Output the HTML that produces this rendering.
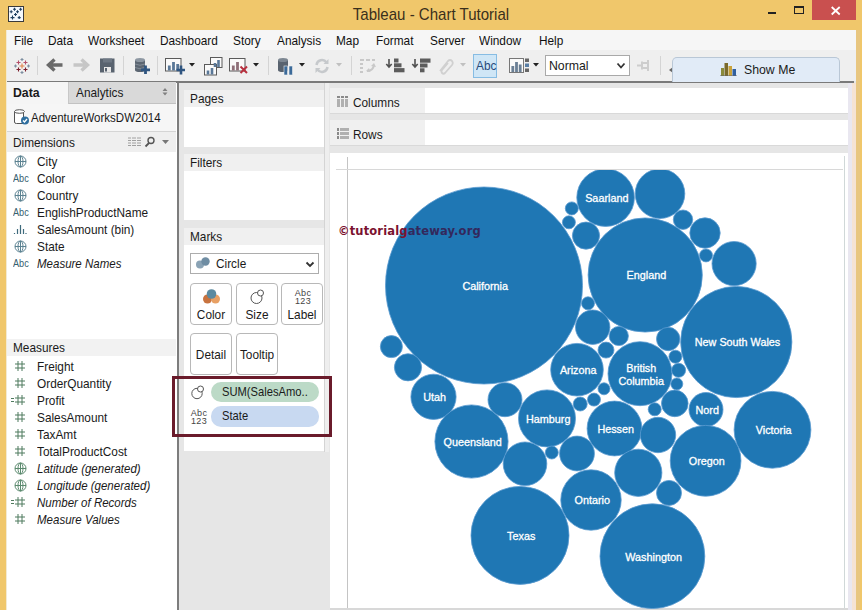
<!DOCTYPE html>
<html><head><meta charset="utf-8"><title>Tableau - Chart Tutorial</title>
<style>
html,body{margin:0;padding:0;}
body{width:862px;height:610px;overflow:hidden;position:relative;background:#f0c76b;font-family:"Liberation Sans",sans-serif;font-size:13px;color:#1a1a1a;}
.abs{position:absolute;}
#win{position:absolute;left:7px;top:30px;width:849px;height:580px;background:#e6e6e6;}
#title{position:absolute;left:0;top:5px;width:862px;text-align:center;font-size:17px;color:#3a2f1c;transform:scaleX(.885);transform-origin:430.5px 50%;}
#menubar{position:absolute;left:7px;top:30px;width:849px;height:20px;background:#f6f6f6;}
#menubar span{position:absolute;top:3px;font-size:13px;color:#111;}
#toolbar{position:absolute;left:7px;top:50px;width:849px;height:31px;background:#efefef;}
#tbline{position:absolute;left:7px;top:81px;width:847px;height:2px;background:#7a7a7a;}
#leftpane{position:absolute;left:7px;top:83px;width:170px;height:527px;background:#fff;}
#vsep{position:absolute;left:176.500px;top:83px;width:2px;height:527px;background:#7d7d7d;}
.card{position:absolute;background:#fff;}
.card .hd{position:absolute;left:0;top:0;right:0;height:17px;background:#f0f0f0;}
.card .hd span{position:absolute;left:6px;top:1px;font-size:13px;}
.lp{position:absolute;left:37px;font-size:13px;white-space:nowrap;transform:scaleX(.91);transform-origin:0 50%;}
span.abs,#menubar span,.card .hd span,.pill span{transform:scaleX(.91);transform-origin:0 50%;white-space:nowrap;}
.btn span{transform:scaleX(.91);}
.pill span{transform:scaleX(.86);}
.it{font-style:italic;}
.lp.it{transform:scaleX(.885);}
.chart{position:absolute;left:0;top:0;}
</style></head><body>
<div id="title">Tableau - Chart Tutorial</div>
<!-- window icon -->
<svg class="abs" style="left:8px;top:6px" width="16" height="16" viewBox="0 0 16 16"><rect x="0.500" y="0.500" width="15" height="15" fill="#f4f8fc" stroke="#3a3a3a"/><path d="M6.5 1.8v3.0M5.0 3.3h3.0M12.6 1.8v3.0M11.1 3.3h3.0M3.2 4.2v3.0M1.7 5.7h3.0M9.5 4.2v3.0M8.0 5.7h3.0M7.5 7.0v3.0M6.0 8.5h3.0M4.5 9.6v4M2.5 11.6h4M11.2 10.1v3.0M9.7 11.6h3.0" stroke="#1f3f5f" stroke-width="1.100" fill="none"/></svg>
<!-- window controls -->
<div class="abs" style="left:812px;top:0;width:44px;height:19.500px;background:#c9504f;"></div>
<svg class="abs" style="left:812px;top:0" width="44" height="20"><path d="M19.700 7l8 7.500M27.700 7l-8 7.500" stroke="#fff" stroke-width="1.800"/></svg>
<div class="abs" style="left:768px;top:11.500px;width:8px;height:2.500px;background:#222;"></div>
<div class="abs" style="left:794px;top:6px;width:8px;height:5px;border:1px solid #222;border-top:2.500px solid #222;"></div>

<div class="abs" style="left:856px;top:30px;width:4px;height:580px;background:#e8c680;"></div><div id="win"></div><div class="abs" style="left:6px;top:30px;width:1px;height:580px;background:#f3ead2;"></div>
<div id="menubar">
<span style="left:7px">File</span><span style="left:41px">Data</span><span style="left:81px">Worksheet</span><span style="left:153px">Dashboard</span><span style="left:226px">Story</span><span style="left:270px">Analysis</span><span style="left:329px">Map</span><span style="left:369px">Format</span><span style="left:423px">Server</span><span style="left:472px">Window</span><span style="left:532px">Help</span>
</div>
<div id="toolbar"></div>
<div id="tbline"></div>
<svg class="abs" style="left:14px;top:57.500px" width="16" height="16" viewBox="0 0 16 16"><g fill="none" stroke-width="1.100"><path d="M8 5.500v5M5.500 8h5" stroke="#e0824a"/><path d="M4.500 2.500v4M2.500 4.500h4M11.500 2.500v4M9.500 4.500h4" stroke="#b5506a"/><path d="M4.500 9.500v4M2.500 11.500h4M11.500 9.500v4M9.500 11.500h4" stroke="#7c1f2c"/><path d="M8 0v3M6.500 1.500h3M8 13v3M6.500 14.500h3M1.500 6.500v3M0 8h3M14.500 6.500v3M13 8h3" stroke="#7d8ea0"/></g></svg>
<div class="abs" style="left:37px;top:56px;width:1px;height:19px;background:#d4d4d4;"></div>
<svg class="abs" style="left:46px;top:57px" width="18" height="16"><path d="M16.500 8h-12M8.500 2.500l-6 5.500l6 5.500" fill="none" stroke="#6a6a6a" stroke-width="3.400"/></svg>
<svg class="abs" style="left:72px;top:57px" width="18" height="16"><path d="M1.500 8h12M9.500 2.500l6 5.500l-6 5.500" fill="none" stroke="#c6c6c6" stroke-width="3.400"/></svg>
<svg class="abs" style="left:100px;top:58px" width="15" height="15"><rect x="0" y="0.500" width="14.500" height="14" fill="#59636f"/><rect x="4" y="9" width="7" height="5.500" fill="#e8e8e8"/><rect x="5" y="10" width="2" height="3.500" fill="#59636f"/><rect x="3" y="0.500" width="9" height="4" fill="#6d7783"/></svg>
<div class="abs" style="left:123px;top:56px;width:1px;height:19px;background:#d4d4d4;"></div>
<svg class="abs" style="left:134px;top:57px" width="17" height="18"><path d="M1 3v10q0 2 5 2q5 0 5-2v-10" fill="#5c6672"/><ellipse cx="6" cy="3" rx="5" ry="2" fill="#8d97a2"/><path d="M1 7q5 2.500 10 0M1 10.500q5 2.500 10 0" fill="none" stroke="#8d97a2" stroke-width="0.800"/><path d="M11.500 8.500v8.500M7 12.800h9" stroke="#2f5580" stroke-width="2.800"/></svg>
<div class="abs" style="left:157px;top:56px;width:1px;height:19px;background:#d4d4d4;"></div>
<svg class="abs" style="left:165px;top:58px" width="20" height="17"><rect x="0.500" y="0.500" width="15.500" height="12.500" fill="#fafafa" stroke="#5a5a5a"/><path d="M4.300 12.500v-5M8.500 12.500v-8.500M12.700 12.500v-6.500" stroke="#5a7898" stroke-width="2.800"/><path d="M16 7.500v9M11.500 12h9" stroke="#2f5580" stroke-width="2.600"/></svg>
<svg class="abs" style="left:188.5px;top:63px" width="6" height="4"><path d="M0 0h6l-3 3.500z" fill="#222"/></svg>
<svg class="abs" style="left:204px;top:57px" width="19" height="19"><rect x="6.500" y="0.500" width="11.500" height="10" fill="#fafafa" stroke="#5a5a5a"/><rect x="0.500" y="7.500" width="12" height="10.500" fill="#fafafa" stroke="#5a5a5a"/><path d="M11 10v-4M14.500 10v-7" stroke="#5a7898" stroke-width="2.600"/><path d="M4 17.500v-4M8 17.500v-6.500" stroke="#5a7898" stroke-width="2.600"/></svg>
<svg class="abs" style="left:229px;top:58px" width="20" height="17"><rect x="0.500" y="0.500" width="15.500" height="12.500" fill="#fafafa" stroke="#5a5a5a"/><path d="M4.300 12.500v-5M8.500 12.500v-8.500" stroke="#8f6f78" stroke-width="2.800"/><path d="M11.500 8.500l6.500 6.500M18 8.500l-6.500 6.500" stroke="#b8303f" stroke-width="2"/></svg>
<svg class="abs" style="left:252.5px;top:63px" width="6" height="4"><path d="M0 0h6l-3 3.500z" fill="#222"/></svg>
<div class="abs" style="left:268px;top:56px;width:1px;height:19px;background:#d4d4d4;"></div>
<svg class="abs" style="left:277px;top:57px" width="17" height="19"><path d="M1 3v10q0 2 5 2q5 0 5-2v-10" fill="#59636f"/><ellipse cx="6" cy="3" rx="5" ry="2" fill="#7d8792"/><rect x="7" y="9" width="3.500" height="9" fill="#3b6a99" stroke="#f1f1f1" stroke-width="0.600"/><rect x="12" y="9" width="3.500" height="9" fill="#3b6a99" stroke="#f1f1f1" stroke-width="0.600"/></svg>
<svg class="abs" style="left:298.5px;top:63px" width="6" height="4"><path d="M0 0h6l-3 3.500z" fill="#222"/></svg>
<svg class="abs" style="left:314px;top:58px" width="16" height="16"><path d="M2.500 7a5.500 5.500 0 0 1 10-2.500M13.500 9a5.500 5.500 0 0 1-10 2.500" fill="none" stroke="#c6c9cc" stroke-width="2.500"/><path d="M14.500 1v5h-5zM1.500 15v-5h5z" fill="#c6c9cc"/></svg>
<svg class="abs" style="left:336.0px;top:63px" width="6" height="4"><path d="M0 0h6l-3 3.500z" fill="#c0c0c0"/></svg>
<div class="abs" style="left:351px;top:56px;width:1px;height:19px;background:#d4d4d4;"></div>
<svg class="abs" style="left:359px;top:58px" width="18" height="16"><path d="M1 2h4M7 2h4M13 2h3M1 6h3M1 10h3M1 14h3" stroke="#c8c8c8" stroke-width="2"/><path d="M8 13q6 0 7-6" fill="none" stroke="#c8c8c8" stroke-width="2"/><path d="M12 8l3-3l2 4zM10 10l-3 3l4 1z" fill="#c8c8c8"/></svg>
<svg class="abs" style="left:385px;top:58px" width="20" height="15"><path d="M4 1v7.500M1.300 6l2.700 3l2.700-3" fill="none" stroke="#505050" stroke-width="1.600"/><rect x="9" y="0.500" width="4.500" height="4" fill="#5c5c5c"/><rect x="9" y="5.300" width="7.500" height="4" fill="#5c5c5c"/><rect x="9" y="10.100" width="10.500" height="4.200" fill="#5c5c5c"/></svg>
<svg class="abs" style="left:411px;top:58px" width="20" height="15"><path d="M4 1v7.500M1.300 6l2.700 3l2.700-3" fill="none" stroke="#505050" stroke-width="1.600"/><rect x="9" y="0.500" width="10.500" height="4.200" fill="#5c5c5c"/><rect x="9" y="5.500" width="7.500" height="4" fill="#5c5c5c"/><rect x="9" y="10.300" width="4.500" height="4" fill="#5c5c5c"/></svg>
<svg class="abs" style="left:437px;top:57px" width="17" height="18"><path d="M3 14l8-10q2-2 4 0q1.500 2 0 4l-7 8q-1.500 1.500-3 0q-1-1.500 0-3l6-7" fill="none" stroke="#d0d0d0" stroke-width="1.800"/></svg>
<svg class="abs" style="left:460.0px;top:63px" width="6" height="4"><path d="M0 0h6l-3 3.500z" fill="#c0c0c0"/></svg>
<div class="abs" style="left:473px;top:54px;width:22px;height:22px;background:#cfe6f6;border:1px solid #86bce3;"></div>
<span class="abs" style="left:476px;top:58px;font-size:13px;color:#274a7a;">Abc</span>
<svg class="abs" style="left:509px;top:58px" width="21" height="15"><rect x="0.500" y="0.500" width="14" height="14" fill="#fafafa" stroke="#777"/><path d="M3.800 14v-6M7.500 14v-10M11.200 14v-7.500" stroke="#6a7f95" stroke-width="2.800"/><rect x="16" y="0.500" width="4" height="3.500" fill="#666"/><rect x="16" y="5.500" width="4" height="3.500" fill="#5a7fa5"/><rect x="16" y="10.500" width="4" height="3.500" fill="#666"/></svg>
<svg class="abs" style="left:532.5px;top:63px" width="6" height="4"><path d="M0 0h6l-3 3.500z" fill="#222"/></svg>
<div class="abs" style="left:545px;top:55px;width:83px;height:19px;background:#fff;border:1px solid #a9a9a9;"></div>
<span class="abs" style="left:549px;top:58px;font-size:13.5px;">Normal</span>
<svg class="abs" style="left:616px;top:62px" width="10" height="8"><path d="M1.500 1.500l3.500 4l3.500-4" fill="none" stroke="#333" stroke-width="1.800"/></svg>
<svg class="abs" style="left:637px;top:59px" width="16" height="13"><path d="M0 6.500h5M5 2.500v8M5 4h6M5 9h6M11 1v11" fill="none" stroke="#cdcdcd" stroke-width="2"/></svg>
<div class="abs" style="left:660px;top:56px;width:1px;height:19px;background:#d4d4d4;"></div>
<svg class="abs" style="left:669px;top:67px" width="4" height="6"><path d="M4 0v6l-4-3z" fill="#666"/></svg>
<div class="abs" style="left:672px;top:57px;width:166px;height:24px;background:#e1ebf7;border:1px solid #b9c7d6;border-bottom:none;border-radius:5px 5px 0 0;"></div>
<svg class="abs" style="left:720px;top:62px" width="18" height="14"><rect x="1" y="6" width="3" height="8" fill="#8a8a3a"/><rect x="4.500" y="1" width="3.500" height="13" fill="#7a6a2a"/><rect x="8.500" y="4" width="3.500" height="10" fill="#c9a23a"/><rect x="12.500" y="7" width="3.500" height="7" fill="#2f5f9f"/><rect x="0" y="13.500" width="17" height="1" fill="#666"/></svg>
<span class="abs" style="left:744px;top:62px;font-size:13.5px;">Show Me</span>
<div id="leftpane"></div>
<div id="vsep"></div>
<div class="abs" style="left:7px;top:82px;width:61px;height:22px;background:#f5f5f5;"></div>
<div class="abs" style="left:68px;top:82px;width:108px;height:21px;background:#d9d9d9;border-bottom:1px solid #c2c2c2;border-left:1px solid #c8c8c8;box-sizing:border-box;height:22px;"></div>
<span class="abs" style="left:13px;top:85px;font-size:13.5px;font-weight:bold;">Data</span>
<span class="abs" style="left:76px;top:85px;font-size:13px;">Analytics</span>
<svg class="abs" style="left:162px;top:88px" width="6" height="8"><path d="M3 0l2.500 3h-5zM3 7.500l2.500-3h-5z" fill="#808080"/></svg>
<div class="abs" style="left:7px;top:104px;width:169px;height:27px;background:#f6f6f6;border-bottom:1px solid #d5d5d5;"></div>
<svg class="abs" style="left:13px;top:108px" width="18" height="18" viewBox="0 0 18 18"><path d="M1.500 3.500v10.500q0 1.500 2 1.500h7v-12" fill="#fff" stroke="#555" stroke-width="1"/><ellipse cx="6.500" cy="3.500" rx="5" ry="1.800" fill="#fff" stroke="#555"/><circle cx="12" cy="12.500" r="4" fill="#2f6f9f"/><path d="M10 12.500l1.500 1.500l2.500-3" stroke="#fff" stroke-width="1.300" fill="none"/></svg>
<span class="abs" style="left:31px;top:110px;font-size:13px;transform:scaleX(.885);">AdventureWorksDW2014</span>
<div class="abs" style="left:7px;top:132px;width:169px;height:20px;background:#efefef;"></div>
<span class="abs" style="left:13px;top:135px;font-size:13px;">Dimensions</span>
<svg class="abs" style="left:128px;top:137px" width="14" height="10"><path d="M0 1h3M4 1h4M9 1h4M0 3.500h3M4 3.500h4M9 3.500h4M0 6h3M4 6h4M9 6h4M0 8.500h3M4 8.500h4M9 8.500h4" stroke="#a0a0a0" stroke-width="1"/></svg>
<svg class="abs" style="left:144px;top:136px" width="12" height="12"><circle cx="7" cy="4.500" r="3" fill="none" stroke="#555" stroke-width="1.400"/><path d="M5 7l-3.500 3.500" stroke="#555" stroke-width="1.800"/></svg>
<svg class="abs" style="left:162px;top:140px" width="7" height="5"><path d="M0 0h7l-3.500 4z" fill="#777"/></svg>
<span class="lp" style="top:153.5px">City</span>
<svg class="abs" style="left:14px;top:155px" width="13" height="13" viewBox="0 0 13 13"><g fill="none" stroke="#5b8291" stroke-width="1"><circle cx="6.500" cy="6.500" r="5.500"/><ellipse cx="6.500" cy="6.500" rx="2.500" ry="5.500"/><path d="M1 6.500h11M6.500 1v11"/></g></svg>
<span class="lp" style="top:170.5px">Color</span>
<span class="abs" style="left:13px;top:172.5px;font-size:10px;color:#35606f;">Abc</span>
<span class="lp" style="top:187.5px">Country</span>
<svg class="abs" style="left:14px;top:189px" width="13" height="13" viewBox="0 0 13 13"><g fill="none" stroke="#5b8291" stroke-width="1"><circle cx="6.500" cy="6.500" r="5.500"/><ellipse cx="6.500" cy="6.500" rx="2.500" ry="5.500"/><path d="M1 6.500h11M6.500 1v11"/></g></svg>
<span class="lp" style="top:204.5px">EnglishProductName</span>
<span class="abs" style="left:13px;top:206.5px;font-size:10px;color:#35606f;">Abc</span>
<span class="lp" style="top:221.5px">SalesAmount (bin)</span>
<svg class="abs" style="left:13px;top:223px" width="14" height="12" viewBox="0 0 14 12"><path d="M1.500 10v1M4.500 6v5M7.500 2v9M10.500 6v5M13 10v1" stroke="#3f6b7d" stroke-width="1.2" fill="none"/></svg>
<span class="lp" style="top:238.5px">State</span>
<svg class="abs" style="left:14px;top:240px" width="13" height="13" viewBox="0 0 13 13"><g fill="none" stroke="#5b8291" stroke-width="1"><circle cx="6.500" cy="6.500" r="5.500"/><ellipse cx="6.500" cy="6.500" rx="2.500" ry="5.500"/><path d="M1 6.500h11M6.500 1v11"/></g></svg>
<span class="lp it" style="top:255.5px">Measure Names</span>
<span class="abs" style="left:13px;top:257.5px;font-size:10px;color:#35606f;">Abc</span>
<div class="abs" style="left:7px;top:339px;width:169px;height:17px;background:#f2f2f2;"></div>
<span class="abs" style="left:13px;top:340px;font-size:13px;">Measures</span>
<span class="lp" style="top:358.5px">Freight</span>
<svg class="abs" style="left:15.0px;top:361.0px" width="10" height="10" viewBox="0 0 10 10"><path d="M3 0v10M7 0v10M0 3h10M0 7h10" stroke="#4f7a5e" stroke-width="1" fill="none"/></svg>
<span class="lp" style="top:375.5px">OrderQuantity</span>
<svg class="abs" style="left:15.0px;top:378.0px" width="10" height="10" viewBox="0 0 10 10"><path d="M3 0v10M7 0v10M0 3h10M0 7h10" stroke="#4f7a5e" stroke-width="1" fill="none"/></svg>
<span class="lp" style="top:392.5px">Profit</span>
<svg class="abs" style="left:15.0px;top:395.0px" width="10" height="10" viewBox="0 0 10 10"><path d="M3 0v10M7 0v10M0 3h10M0 7h10" stroke="#4f7a5e" stroke-width="1" fill="none"/></svg>
<svg class="abs" style="left:10.500px;top:397px" width="4" height="6"><path d="M0 1.500h3M0 4.500h3" stroke="#4f7a5e" stroke-width="1"/></svg>
<span class="lp" style="top:409.5px">SalesAmount</span>
<svg class="abs" style="left:15.0px;top:412.0px" width="10" height="10" viewBox="0 0 10 10"><path d="M3 0v10M7 0v10M0 3h10M0 7h10" stroke="#4f7a5e" stroke-width="1" fill="none"/></svg>
<span class="lp" style="top:426.5px">TaxAmt</span>
<svg class="abs" style="left:15.0px;top:429.0px" width="10" height="10" viewBox="0 0 10 10"><path d="M3 0v10M7 0v10M0 3h10M0 7h10" stroke="#4f7a5e" stroke-width="1" fill="none"/></svg>
<span class="lp" style="top:443.5px">TotalProductCost</span>
<svg class="abs" style="left:15.0px;top:446.0px" width="10" height="10" viewBox="0 0 10 10"><path d="M3 0v10M7 0v10M0 3h10M0 7h10" stroke="#4f7a5e" stroke-width="1" fill="none"/></svg>
<span class="lp it" style="top:460.5px">Latitude (generated)</span>
<svg class="abs" style="left:14px;top:462px" width="13" height="13" viewBox="0 0 13 13"><g fill="none" stroke="#5b8a6e" stroke-width="1"><circle cx="6.500" cy="6.500" r="5.500"/><ellipse cx="6.500" cy="6.500" rx="2.500" ry="5.500"/><path d="M1 6.500h11M6.500 1v11"/></g></svg>
<span class="lp it" style="top:477.5px">Longitude (generated)</span>
<svg class="abs" style="left:14px;top:479px" width="13" height="13" viewBox="0 0 13 13"><g fill="none" stroke="#5b8a6e" stroke-width="1"><circle cx="6.500" cy="6.500" r="5.500"/><ellipse cx="6.500" cy="6.500" rx="2.500" ry="5.500"/><path d="M1 6.500h11M6.500 1v11"/></g></svg>
<span class="lp it" style="top:494.5px">Number of Records</span>
<svg class="abs" style="left:15.0px;top:497.0px" width="10" height="10" viewBox="0 0 10 10"><path d="M3 0v10M7 0v10M0 3h10M0 7h10" stroke="#4f7a5e" stroke-width="1" fill="none"/></svg>
<svg class="abs" style="left:10.500px;top:499px" width="4" height="6"><path d="M0 1.500h3M0 4.500h3" stroke="#4f7a5e" stroke-width="1"/></svg>
<span class="lp it" style="top:511.5px">Measure Values</span>
<svg class="abs" style="left:15.0px;top:514.0px" width="10" height="10" viewBox="0 0 10 10"><path d="M3 0v10M7 0v10M0 3h10M0 7h10" stroke="#4f7a5e" stroke-width="1" fill="none"/></svg>

<style>
.btn{position:absolute;width:40px;height:40px;border:1px solid #b8b8b8;border-radius:4px;background:#fff;}
.btn span{position:absolute;left:-4px;right:-4px;bottom:2px;text-align:center;font-size:13px;}
.pill{position:absolute;left:211px;width:108px;height:20px;border-radius:10px;}
.pill span{position:absolute;left:11px;top:2px;font-size:13px;white-space:nowrap;}
.a123{position:absolute;font-size:9px;line-height:8px;text-align:center;color:#444;letter-spacing:0.3px;}
</style>
<div class="abs" style="left:324px;top:83px;width:1px;height:369px;background:#d4d4d4;"></div>
<div class="abs" style="left:325px;top:83px;width:4px;height:369px;background:#eeeeee;"></div>
<div class="card" style="left:184px;top:90px;width:140px;height:57px;"><div class="hd"><span>Pages</span></div></div>
<div class="card" style="left:184px;top:154px;width:140px;height:66px;"><div class="hd"><span>Filters</span></div></div>
<div class="card" style="left:184px;top:228px;width:140px;height:223px;"><div class="hd"><span>Marks</span></div></div>
<div class="abs" style="left:190px;top:253px;width:127px;height:18.500px;border:1px solid #adadad;background:#fff;"></div>
<span class="abs" style="left:216px;top:256px;font-size:13px;">Circle</span>
<svg class="abs" style="left:195px;top:256px" width="18" height="14"><circle cx="5" cy="8.500" r="4" fill="#8aa3b5"/><circle cx="10.500" cy="5.500" r="4.200" fill="#6f8da3"/></svg>
<svg class="abs" style="left:305px;top:260.500px" width="10" height="8"><path d="M1.500 1.500l3.500 3.500l3.500-3.500" fill="none" stroke="#333" stroke-width="1.800"/></svg>
<div class="btn" style="left:190px;top:283px;"><span>Color</span></div>
<div class="btn" style="left:236px;top:283px;"><span>Size</span></div>
<div class="btn" style="left:281px;top:283px;"><span>Label</span></div>
<div class="btn" style="left:190px;top:333px;"><span style="bottom:12px">Detail</span></div>
<div class="btn" style="left:236px;top:333px;"><span style="bottom:12px">Tooltip</span></div>
<svg class="abs" style="left:201px;top:287px" width="22" height="20"><circle cx="6.500" cy="12" r="4.500" fill="#c8733f"/><circle cx="14.500" cy="12" r="4.500" fill="#e8a064"/><circle cx="10.500" cy="7" r="4.800" fill="#5b8aa0"/></svg>
<svg class="abs" style="left:248px;top:287px" width="20" height="20"><circle cx="8.500" cy="11" r="5.500" fill="#fff" stroke="#555" stroke-width="1"/><circle cx="12.500" cy="6" r="3" fill="#fff" stroke="#555" stroke-width="1"/></svg>
<div class="a123" style="left:292px;top:289px;width:22px;">Abc<br>123</div>
<!-- pills -->
<div class="pill" style="top:382px;background:#bcdac7;"><span>SUM(SalesAmo..</span></div>
<div class="pill" style="top:406px;height:21px;background:#c8d9f1;"><span>State</span></div>
<svg class="abs" style="left:189px;top:383px" width="20" height="20"><circle cx="8" cy="10.500" r="5.200" fill="#fff" stroke="#555" stroke-width="1"/><circle cx="11.500" cy="6" r="3" fill="#fff" stroke="#555" stroke-width="1"/></svg>
<div class="a123" style="left:188px;top:409px;width:22px;">Abc<br>123</div>



<!-- shelves -->
<div class="abs" style="left:330px;top:88px;width:518px;height:25px;background:#fff;border-bottom:1px solid #d9d9d9;"></div>
<div class="abs" style="left:330px;top:88px;width:95px;height:25px;background:#f0f0f0;"></div>
<div class="abs" style="left:330px;top:120px;width:518px;height:25px;background:#fff;border-bottom:1px solid #d9d9d9;"></div>
<div class="abs" style="left:330px;top:120px;width:95px;height:25px;background:#f0f0f0;"></div>
<span class="abs" style="left:353px;top:95px;font-size:13px;">Columns</span>
<span class="abs" style="left:353px;top:127px;font-size:13px;">Rows</span>
<svg class="abs" style="left:336px;top:95px" width="14" height="14"><g fill="#8a8a8a"><rect x="1" y="1" width="3" height="2"/><rect x="5" y="1" width="3" height="2"/><rect x="9" y="1" width="3" height="2"/><rect x="1" y="4" width="3" height="8" fill="#b0b0b0"/><rect x="5" y="4" width="3" height="8" fill="#b0b0b0"/><rect x="9" y="4" width="3" height="8" fill="#b0b0b0"/></g></svg>
<svg class="abs" style="left:336px;top:127px" width="14" height="14"><g fill="#8a8a8a"><rect x="1" y="1" width="2" height="3"/><rect x="1" y="5" width="2" height="3"/><rect x="1" y="9" width="2" height="3"/><rect x="4" y="1" width="9" height="3" fill="#b0b0b0"/><rect x="4" y="5" width="9" height="3" fill="#b0b0b0"/><rect x="4" y="9" width="9" height="3" fill="#b0b0b0"/></g></svg>
<!-- chart pane -->
<div class="abs" style="left:330px;top:153px;width:518px;height:456px;background:#fff;"></div>
<div class="abs" style="left:848px;top:83px;width:4px;height:527px;background:#e9e7f0;"></div><div class="abs" style="left:852px;top:83px;width:4px;height:527px;background:#f5e3d4;"></div>
<div class="abs" style="left:844px;top:156px;width:1px;height:453px;background:#d0d8d8;"></div>
<div class="abs" style="left:347px;top:157px;width:1px;height:452px;background:#c4c4c4;"></div>
<div class="abs" style="left:336px;top:169px;width:507px;height:1px;background:#d8d8d8;"></div>
<div class="abs" style="left:330px;top:608px;width:518px;height:2px;background:#d8d8d8;"></div>


<svg class="chart" width="862" height="610" viewBox="0 0 862 610">
<defs><clipPath id="cp"><rect x="348" y="170" width="496" height="439"/></clipPath></defs>
<g clip-path="url(#cp)" fill="#1f77b4" stroke="#5a9bd0" stroke-width="0.8">
<circle cx="484" cy="285.5" r="98.5"/><circle cx="605.6" cy="197.6" r="28.8"/><circle cx="660" cy="193.7" r="24.8"/><circle cx="571.8" cy="208.4" r="6.5"/><circle cx="568.9" cy="222.3" r="6.5"/><circle cx="586" cy="235.6" r="13.6"/><circle cx="645.2" cy="275" r="57.1"/><circle cx="683" cy="219.7" r="9.7"/><circle cx="705" cy="233" r="15.2"/><circle cx="706" cy="255.4" r="6.5"/><circle cx="734.1" cy="263.6" r="22.1"/><circle cx="588" cy="303.3" r="6.5"/><circle cx="391.4" cy="346.6" r="11"/><circle cx="408" cy="367.3" r="13.6"/><circle cx="433.5" cy="396.8" r="22.6"/><circle cx="471.5" cy="441.5" r="36.6"/><circle cx="505" cy="399.7" r="17"/><circle cx="547" cy="418.4" r="28.5"/><circle cx="577" cy="369.7" r="26.3"/><circle cx="592.7" cy="327.2" r="17.2"/><circle cx="606" cy="350.1" r="8"/><circle cx="604" cy="388.8" r="6"/><circle cx="594" cy="399.6" r="6.5"/><circle cx="580.2" cy="404" r="7"/><circle cx="525" cy="463.8" r="21.8"/><circle cx="551.8" cy="452.5" r="6.5"/><circle cx="577" cy="453.5" r="17.4"/><circle cx="736.3" cy="342" r="55.6"/><circle cx="640" cy="373.7" r="32"/><circle cx="618.8" cy="336" r="9.6"/><circle cx="668.2" cy="339" r="11.7"/><circle cx="675.4" cy="356.7" r="6.5"/><circle cx="678.6" cy="370.3" r="7"/><circle cx="676.8" cy="383.9" r="6"/><circle cx="674.8" cy="403.4" r="13.3"/><circle cx="654.7" cy="409.3" r="6.5"/><circle cx="706" cy="409.5" r="17"/><circle cx="772.5" cy="429.8" r="38.4"/><circle cx="614.5" cy="428.5" r="27.4"/><circle cx="658" cy="435" r="17.7"/><circle cx="520" cy="535.4" r="49"/><circle cx="591" cy="500" r="30.2"/><circle cx="652.4" cy="556.2" r="52.4"/><circle cx="638.3" cy="472.8" r="23.6"/><circle cx="669" cy="492.9" r="12.5"/><circle cx="705.6" cy="460.8" r="35.4"/>
</g>
<g fill="#fff" font-family="Liberation Sans, sans-serif" font-size="10.8" text-anchor="middle" stroke="#fff" stroke-width="0.3">
<text x="485.2" y="289.9">California</text><text x="606.8" y="202.0">Saarland</text><text x="646.4" y="279.4">England</text><text x="434.7" y="401.2">Utah</text><text x="472.7" y="445.9">Queensland</text><text x="548.2" y="422.8">Hamburg</text><text x="578.2" y="374.1">Arizona</text><text x="737.5" y="346.4">New South Wales</text><text x="641.2" y="371.5">British</text><text x="641.2" y="384.5">Columbia</text><text x="707.2" y="413.9">Nord</text><text x="773.7" y="434.2">Victoria</text><text x="615.7" y="432.9">Hessen</text><text x="521.2" y="539.8">Texas</text><text x="592.2" y="504.4">Ontario</text><text x="653.6" y="560.6">Washington</text><text x="706.8" y="465.2">Oregon</text>
</g>
</svg>
<span class="abs" style="left:338px;top:224px;font-family:'DejaVu Sans','Liberation Sans',sans-serif;font-weight:bold;font-size:11.5px;color:#7a1230;letter-spacing:0.15px;transform:none;">©tutorialg<span style="color:#33285c">ateway.org</span></span>
<div class="abs" style="left:172px;top:376px;width:154px;height:55px;border:3px solid #6a1b2b;"></div>
</body></html>
